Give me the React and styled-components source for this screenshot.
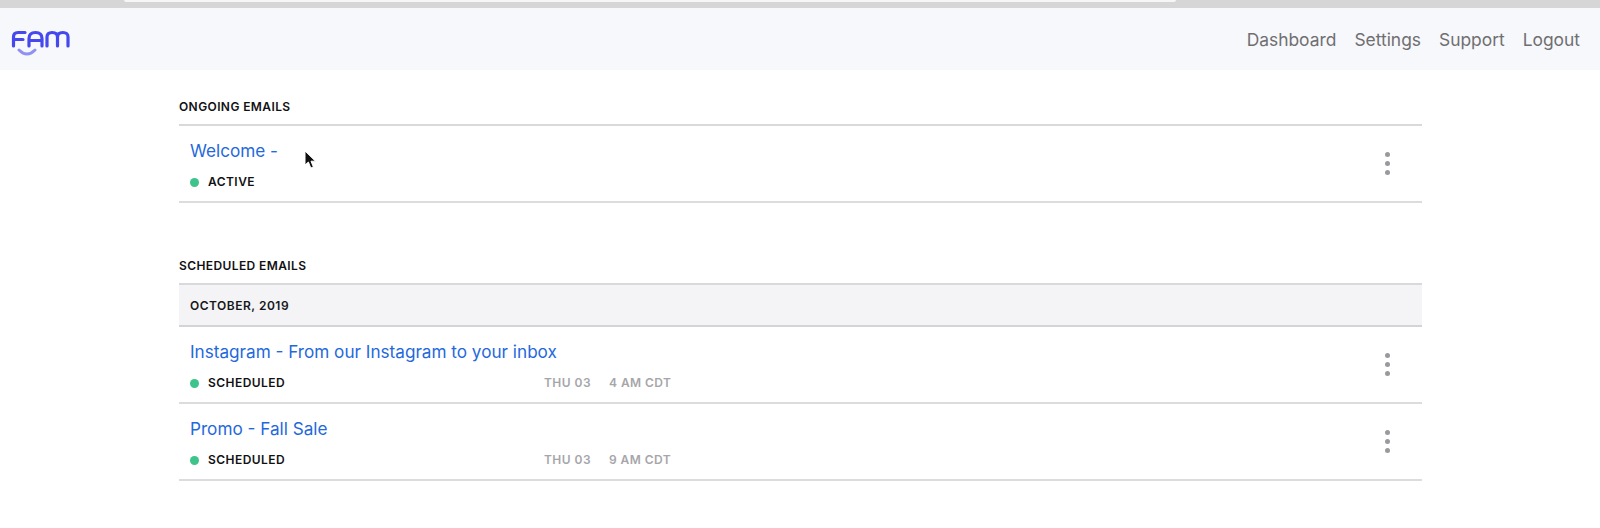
import styled, { createGlobalStyle } from "styled-components";

const GlobalStyle = createGlobalStyle`
  html, body {
    margin: 0;
    padding: 0;
    background: #ffffff;
    font-family: "Inter", "Liberation Sans", sans-serif;
    overflow: hidden;
  }
`;

const Page = styled.div`
  position: relative;
  width: 1600px;
  height: 528px;
  overflow: hidden;
`;

const BrowserEdge = styled.div`
  height: 8px;
  background: #d6d6d6;
  display: flex;
  padding-left: 124px;
  box-sizing: border-box;
`;

const BrowserTab = styled.div`
  width: 1052px;
  height: 2px;
  background: #f6f6f6;
  border-radius: 0 0 4px 4px;
`;

const Navbar = styled.header`
  height: 62px;
  background: #f7f8fb;
  display: flex;
  align-items: center;
  justify-content: space-between;
  padding: 0 20px 0 11px;
`;

const Logo = styled.svg`
  display: block;
  margin-top: 8px;
`;

const NavLinks = styled.nav`
  display: flex;
  gap: 18px;
`;

const NavLink = styled.a`
  font-size: 17.4px;
  color: #6f6f72;
  line-height: 20px;
  padding-top: 1px;
`;

const Main = styled.main`
  width: 1243px;
  margin-left: 179px;
  padding-top: 27px;
`;

const Section = styled.section`
  margin-bottom: 53px;
`;

const SectionTitle = styled.h2`
  margin: 0;
  height: 27px;
  font-size: 12px;
  line-height: 20px;
  font-weight: 600;
  letter-spacing: 0.4px;
  color: #111114;
  text-transform: uppercase;
`;

const List = styled.div`
  border-top: 2px solid #d9d9dc;
`;

const MonthBand = styled.div`
  height: 40px;
  display: flex;
  align-items: center;
  padding-left: 11px;
  background: #f4f4f7;
  border-bottom: 2px solid #d4d4d8;
  font-size: 12px;
  font-weight: 600;
  letter-spacing: 0.5px;
  color: #17171a;
`;

const Row = styled.div`
  height: 75px;
  display: flex;
  align-items: center;
  justify-content: space-between;
  padding: 0 32px 0 11px;
  border-bottom: 2px solid #dcdcdf;
`;

const RowBody = styled.div`
  display: flex;
  flex-direction: column;
  gap: 12px;
  margin-top: 3px;
`;

const EmailTitle = styled.a`
  font-size: 17.15px;
  line-height: 22px;
  color: #1f69dc;
`;

const Meta = styled.div`
  display: flex;
  align-items: center;
  font-size: 12px;
  line-height: 16px;
  font-weight: 600;
  letter-spacing: 0.45px;
`;

const Status = styled.span`
  display: flex;
  align-items: center;
  gap: 9px;
  width: 354px;
  color: #111114;
`;

const Dot = styled.i`
  width: 9px;
  height: 9px;
  border-radius: 50%;
  background: #3cc48a;
`;

const When = styled.span`
  color: #a6a6aa;
  margin-right: ${(props) => props.$gap || 0}px;
`;

const MoreButton = styled.button`
  display: flex;
  flex-direction: column;
  gap: 4px;
  padding: 0;
  border: 0;
  background: none;
`;

const MoreDot = styled.i`
  width: 5px;
  height: 5px;
  border-radius: 50%;
  background: #9a9a9e;
`;

const Cursor = styled.svg`
  position: absolute;
  left: 304px;
  top: 150px;
`;

function More() {
  return (
    <MoreButton aria-label="More">
      <MoreDot />
      <MoreDot />
      <MoreDot />
    </MoreButton>
  );
}

function EmailRow({ title, status, day, time }) {
  return (
    <Row>
      <RowBody>
        <EmailTitle>{title}</EmailTitle>
        <Meta>
          <Status>
            <Dot />
            {status}
          </Status>
          {day && <When $gap={18}>{day}</When>}
          {time && <When>{time}</When>}
        </Meta>
      </RowBody>
      <More />
    </Row>
  );
}

export default function App() {
  return (
    <Page>
      <GlobalStyle />
      <BrowserEdge>
        <BrowserTab />
      </BrowserEdge>
      <Navbar>
        <Logo width="60" height="28" viewBox="0 0 60 28" fill="none">
          <g stroke="#4548ec" strokeWidth="3.2" strokeLinecap="round" strokeLinejoin="round">
            <path d="M2.5 17V8Q2.5 3.5 7 3.5H14M2.5 10.5H12" />
            <path d="M18 17V9.5Q18 3.5 24.5 3.5T31 9.5V17M18 11.5H31" />
            <path d="M36 17V8Q36 3.5 41.2 3.5T46.5 8V17M46.5 8Q46.5 3.5 51.8 3.5T57 8V17" />
          </g>
          <path d="M8 21Q16 29 24 21" stroke="#8f92f2" strokeWidth="3" strokeLinecap="round" />
        </Logo>
        <NavLinks>
          <NavLink>Dashboard</NavLink>
          <NavLink>Settings</NavLink>
          <NavLink>Support</NavLink>
          <NavLink>Logout</NavLink>
        </NavLinks>
      </Navbar>
      <Main>
        <Section>
          <SectionTitle>Ongoing Emails</SectionTitle>
          <List>
            <EmailRow title="Welcome -" status="ACTIVE" />
          </List>
        </Section>
        <Section>
          <SectionTitle>Scheduled Emails</SectionTitle>
          <List>
            <MonthBand>OCTOBER, 2019</MonthBand>
            <EmailRow
              title="Instagram - From our Instagram to your inbox"
              status="SCHEDULED"
              day="THU 03"
              time="4 AM CDT"
            />
            <EmailRow
              title="Promo - Fall Sale"
              status="SCHEDULED"
              day="THU 03"
              time="9 AM CDT"
            />
          </List>
        </Section>
      </Main>
      <Cursor width="13" height="20" viewBox="0 0 13 20">
        <path d="M1 1V15L4.4 12L6.8 18L9.4 17L7 11.2H11.5Z" fill="#111" stroke="#fff" strokeWidth="1" />
      </Cursor>
    </Page>
  );
}
